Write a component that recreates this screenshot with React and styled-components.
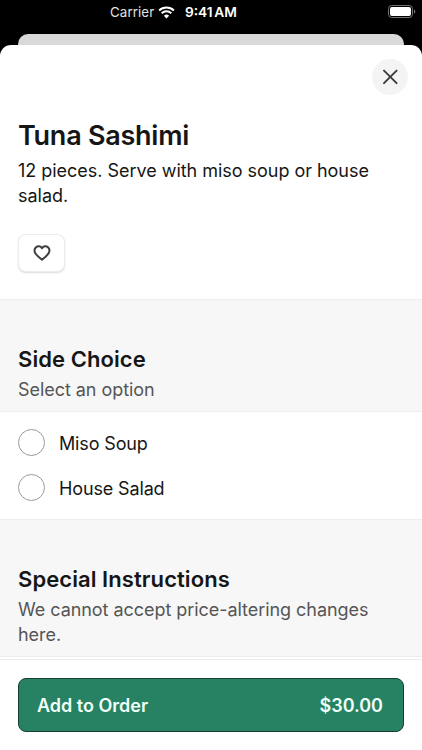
import React, { Component } from "react";
import styled, { createGlobalStyle } from "styled-components";

export default class App extends Component {
  state = {
    choice: null
  };

  handleChoice = choice => {
    this.setState({ choice });
  };

  render() {
    const { choice } = this.state;

    return (
      <Screen>
        <GlobalStyle />
        <StatusBar>
          <Side />
          <StatusCenter>
            <Carrier>Carrier</Carrier>
            <WifiIcon />
            <Time>9:41 AM</Time>
          </StatusCenter>
          <Side>
            <BatteryIcon />
          </Side>
        </StatusBar>
        <BackCard />
        <Sheet>
          <Intro>
            <CloseButton aria-label="Close">
              <CloseIcon />
            </CloseButton>
            <Title>Tuna Sashimi</Title>
            <Description>
              12 pieces. Serve with miso soup or house salad.
            </Description>
            <FavoriteButton aria-label="Favorite">
              <HeartIcon />
            </FavoriteButton>
          </Intro>

          <SectionHeader height={113}>
            <SectionTitle>Side Choice</SectionTitle>
            <Hint>Select an option</Hint>
          </SectionHeader>
          <Options>
            {sides.map(side => (
              <Option key={side} onClick={() => this.handleChoice(side)}>
                <Radio checked={choice === side} />
                <OptionName>{side}</OptionName>
              </Option>
            ))}
          </Options>

          <SectionHeader height={138}>
            <SectionTitle>Special Instructions</SectionTitle>
            <Hint>We cannot accept price-altering changes here.</Hint>
          </SectionHeader>
        </Sheet>
        <Footer>
          <OrderButton>
            <span>Add to Order</span>
            <span>$30.00</span>
          </OrderButton>
        </Footer>
      </Screen>
    );
  }
}

const sides = ["Miso Soup", "House Salad"];

// Icons

const WifiIcon = () => (
  <svg width="17" height="13" viewBox="0 0 17 13" fill="none">
    <path d="M1.1 4.5a10.6 10.6 0 0 1 14.8 0" stroke="#fff" strokeWidth="2" />
    <path d="M3.7 7.2a6.8 6.8 0 0 1 9.6 0" stroke="#fff" strokeWidth="2" />
    <path d="M8.5 12.4 5.9 9.8a3.7 3.7 0 0 1 5.2 0z" fill="#fff" />
  </svg>
);

const BatteryIcon = () => (
  <svg width="28" height="13" viewBox="0 0 28 13" fill="none">
    <rect x="0.5" y="0.5" width="24" height="12" rx="3.2" stroke="#737373" />
    <rect x="2" y="2" width="21" height="9" rx="1.9" fill="#fff" />
    <path d="M26 4.4c1.8.6 1.8 3.6 0 4.2z" fill="#737373" />
  </svg>
);

const CloseIcon = () => (
  <svg width="16" height="16" viewBox="0 0 16 16" fill="none">
    <path
      d="M2 1.600l12.600 12.600M14.600 1.600L2 14.200"
      stroke="#3b3b3b"
      strokeWidth="1.9"
      strokeLinecap="round"
    />
  </svg>
);

const HeartIcon = () => (
  <svg width="18" height="16" viewBox="0 0 18 16" fill="none">
    <path
      d="M9 3.2C7.8 1 4.8.6 3 2.300 1.200 4 1.400 6.600 2.500 8.400 3.800 10.500 6.400 12.800 9 14.700c2.600-1.900 5.200-4.200 6.500-6.300 1.100-1.800 1.300-4.400-.5-6.100C13.200.6 10.200 1 9 3.200z"
      stroke="#404040"
      strokeWidth="2"
      strokeLinejoin="round"
    />
  </svg>
);

const GlobalStyle = createGlobalStyle`
  * {
    box-sizing: border-box;
  }

  body {
    margin: 0;
    background-color: #000;
    font-family: Inter, "Liberation Sans", sans-serif;
    color: #161616;
  }

  button {
    font-family: inherit;
    padding: 0;
    cursor: pointer;
  }
`;

const Screen = styled.div`
  width: 422px;
  height: 750px;
  display: flex;
  flex-direction: column;
  overflow: hidden;
  background-color: #000;
`;

// Status bar

const StatusBar = styled.header`
  height: 34px;
  flex: none;
  display: flex;
  padding: 0 6px 0 0;
  color: #fff;
`;

const Side = styled.div`
  width: 70px;
  display: flex;
  justify-content: flex-end;
  padding-top: 5px;
`;

const StatusCenter = styled.div`
  flex: 1;
  height: 24px;
  display: flex;
  align-items: center;
  padding-left: 40px;
`;

const Carrier = styled.span`
  width: 48px;
  font-size: 13.3px;
  letter-spacing: 0.1px;
  color: #e2e2e2;
`;

const Time = styled.span`
  margin-left: 10px;
  font-size: 13.7px;
  font-weight: 600;
  word-spacing: -1.8px;
  white-space: nowrap;
`;

// Sheet

const BackCard = styled.div`
  height: 11px;
  flex: none;
  margin: 0 18px;
  border-radius: 10px 10px 0 0;
  background-color: #d9d9d9;
`;

const Sheet = styled.main`
  flex: 1;
  min-height: 0;
  overflow: hidden;
  border-radius: 11px 11px 0 0;
  background-color: #fff;
`;

const Intro = styled.section`
  height: 254px;
  display: flex;
  flex-direction: column;
  padding: 14px 14px 0 18px;
`;

const CloseButton = styled.button`
  width: 36px;
  height: 36px;
  flex: none;
  align-self: flex-end;
  display: flex;
  align-items: center;
  justify-content: center;
  border: 0;
  border-radius: 50%;
  background-color: #f4f4f4;
`;

const Title = styled.h1`
  margin: 24px 0 0;
  font-size: 27px;
  line-height: 34px;
  font-weight: 600;
  letter-spacing: -0.25px;
`;

const Description = styled.p`
  margin: 5px 0 0;
  font-size: 18px;
  line-height: 25px;
  letter-spacing: -0.03px;
`;

const FavoriteButton = styled.button`
  width: 47px;
  height: 38px;
  margin-top: 26px;
  display: flex;
  align-items: center;
  justify-content: center;
  border: 1px solid #ececec;
  border-radius: 8px;
  background-color: #fff;
  box-shadow: 0 1px 2px rgba(0, 0, 0, 0.14);
`;

const SectionHeader = styled.header`
  height: ${props => props.height}px;
  padding: 44px 18px 0;
  border-top: 1px solid #eeeeee;
  border-bottom: 1px solid #eeeeee;
  background-color: #f7f7f7;
`;

const SectionTitle = styled.h2`
  margin: 0;
  font-size: 22px;
  line-height: 30px;
  font-weight: 600;
  letter-spacing: 0.07px;
`;

const Hint = styled.p`
  margin: 3px 0 0;
  font-size: 18px;
  line-height: 25px;
  letter-spacing: -0.05px;
  color: #555;
`;

const Options = styled.div`
  height: 107px;
  display: flex;
  flex-direction: column;
  gap: 18px;
  padding: 17px 18px 0;
`;

const Option = styled.div`
  height: 27px;
  display: flex;
  align-items: center;
  gap: 14px;
  cursor: pointer;
`;

const OptionName = styled.span`
  padding-top: 2px;
  font-size: 18px;
  letter-spacing: -0.14px;
`;

const Radio = styled.span`
  width: 27px;
  height: 27px;
  flex: none;
  border: ${props => (props.checked ? "8px solid #268263" : "1px solid #999")};
  border-radius: 50%;
`;

// Footer

const Footer = styled.footer`
  height: 91px;
  flex: none;
  padding: 18px 18px 0;
  border-top: 1px solid #ededed;
  background-color: #fff;
`;

const OrderButton = styled.button`
  width: 100%;
  height: 54px;
  display: flex;
  align-items: center;
  justify-content: space-between;
  padding: 0 20px 0 18px;
  border: 1px solid #173f31;
  border-radius: 8px;
  background-color: #268263;
  color: #f1fff9;
  font-size: 18px;
  font-weight: 600;
`;
